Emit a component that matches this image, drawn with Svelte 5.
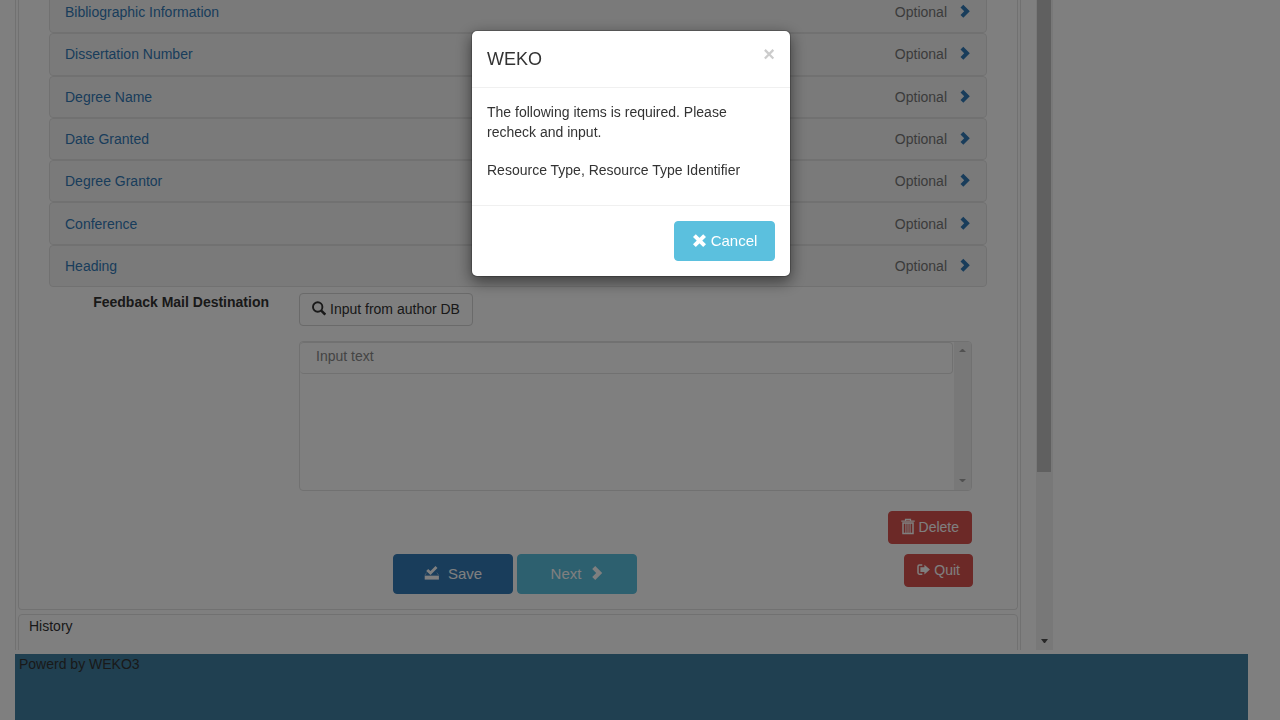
<script>
  const sections = [
    'Bibliographic Information',
    'Dissertation Number',
    'Degree Name',
    'Date Granted',
    'Degree Grantor',
    'Conference',
    'Heading'
  ];
  let open = $state(true);
  const close = () => (open = false);
</script>

<div class="page">
  <main>
    <div class="scroller">
      <div class="content">
        <section class="panel form">
          <div class="sections">
            {#each sections as name}
              <div class="section">
                <a href="#section">{name}</a>
                <span class="optional">Optional</span>
                <a href="#section" aria-label={`Expand ${name}`}>
                  <svg width="10" height="16" viewBox="0 0 10 16"><path fill="currentColor" d="M3.3 .8 9.8 7.3 3.3 13.8 .5 11 4.2 7.3 .5 3.6z" /></svg>
                </a>
              </div>
            {/each}
          </div>

          <div class="feedback">
            <label for="mail">Feedback Mail Destination</label>
            <div class="fields">
              <button class="btn plain">
                <svg width="14" height="16" viewBox="0 0 14 16"><circle cx="5.7" cy="6" r="4.7" fill="none" stroke="currentColor" stroke-width="1.9" /><path d="m9 9.3 4.3 4.3" stroke="currentColor" stroke-width="2.5" /></svg>
                Input from author DB
              </button>
              <div class="mailbox">
                <div class="mails"><input id="mail" type="text" placeholder="Input text" /></div>
                <div class="bar">
                  <svg width="7" height="4" viewBox="0 0 7 4"><path d="M0 4h7L4 1H3z" fill="#a3a3a3" /></svg>
                  <svg width="7" height="4" viewBox="0 0 7 4"><path d="M0 0h7L4 3H3z" fill="#a3a3a3" /></svg>
                </div>
              </div>
              <button class="btn danger delete">
                <svg width="14" height="18" viewBox="0 0 14 18"><path d="M4.5 3V1.3h5V3M.3 3.2h13.4" fill="none" stroke="currentColor" stroke-width="1.2" /><path d="M2 5h10v10.5H2z" fill="none" stroke="currentColor" stroke-width="1.5" /><path d="M4.9 5v10M7 5v10M9.1 5v10" stroke="currentColor" stroke-width="1" /></svg>
                Delete
              </button>
            </div>
          </div>

          <div class="actions">
            <span></span>
            <div class="pair">
              <button class="btn large primary">
                <svg width="16" height="18" viewBox="0 0 16 18"><path d="m3.2 4.9 3.3 3.2 6-6" fill="none" stroke="currentColor" stroke-width="2.8" /><path d="M2.6 7.6.8 10.4h14l-2-2.8" fill="none" stroke="currentColor" stroke-width=".8" opacity=".5" /><path d="M.7 11h14.2v3.6H.7z" fill="currentColor" /></svg>
                Save
              </button>
              <button class="btn large info next">
                Next
                <svg width="12" height="18" viewBox="0 0 12 18"><path fill="currentColor" d="M4.2 .9 11.2 7.9 4.2 14.9 1.2 11.9 5.2 7.9 1.2 3.9z" /></svg>
              </button>
            </div>
            <button class="btn danger quit">
              <svg width="13" height="14" viewBox="0 0 13 14"><path d="M5.3 2H2.4Q1 2 1 3.4v6.4q0 1.4 1.4 1.4h2.9" fill="none" stroke="currentColor" stroke-width="1.5" /><path d="M3.4 4.3h4V1.7L12.9 6.6 7.4 11.5V8.9h-4z" fill="currentColor" /></svg>
              Quit
            </button>
          </div>
        </section>
        <section class="panel history">History</section>
      </div>
      <div class="track">
        <div class="thumb"></div>
        <svg width="7" height="4" viewBox="0 0 7 4"><path d="M0 0h7L4 4H3z" fill="#505050" /></svg>
      </div>
    </div>
  </main>
  <footer>Powerd by WEKO3</footer>
</div>

{#if open}
  <div class="backdrop">
    <div class="dialog" role="dialog" aria-modal="true" aria-labelledby="dialog-title">
      <header>
        <h4 id="dialog-title">WEKO</h4>
        <button class="close" aria-label="Close" onclick={close}>×</button>
      </header>
      <div class="message">
        <p>The following items is required. Please recheck and input.</p>
        <p>Resource Type, Resource Type Identifier</p>
      </div>
      <div class="dialog-actions">
        <button class="btn large info cancel" onclick={close}>
          <svg width="15" height="16" viewBox="0 0 15 16"><path d="m2.4 2.6 10.2 10M12.6 2.6l-10.2 10" stroke="currentColor" stroke-width="4" /></svg>
          Cancel
        </button>
      </div>
    </div>
  </div>
{/if}

<style>
  :global(body) {
    margin: 0;
    background: #fff;
  }
  * {
    box-sizing: border-box;
  }
  .page {
    display: flex;
    flex-direction: column;
    height: 100vh;
    padding: 0 32px 0 15px;
    overflow: hidden;
    font: 14px/20px "Liberation Sans", Arial, sans-serif;
    color: #333;
  }
  main {
    display: grid;
    grid-template-columns: 1038fr 195fr;
    flex: 1;
    min-height: 0;
    margin-bottom: 4px;
  }
  .scroller {
    display: flex;
    justify-content: space-between;
    min-height: 0;
    overflow: hidden;
  }
  .content {
    flex: 1;
    margin-right: 15px;
    padding: 0 2px;
    border: solid #e3e3e3;
    border-width: 0 1px;
  }
  .panel {
    border: 1px solid #e3e3e3;
    border-radius: 4px;
  }
  .form {
    padding: 0 30px 15px;
    border-top: 0;
  }
  .sections {
    display: grid;
    grid-auto-rows: 1fr;
    height: 296px;
    margin-top: -9px;
  }
  .section {
    display: flex;
    align-items: center;
    padding: 0 16px 0 15px;
    background: #f5f5f5;
    border: 1px solid #e3e3e3;
    border-radius: 4px;
  }
  a {
    color: #337ab7;
    text-decoration: none;
  }
  .section svg {
    display: block;
  }
  .optional {
    margin: 0 13px 0 auto;
    color: #777;
  }
  .feedback {
    display: grid;
    grid-template-columns: 220px 1fr;
    column-gap: 30px;
    padding: 5px 15px 0 0;
  }
  label {
    font-weight: bold;
    text-align: right;
  }
  .fields {
    display: flex;
    flex-direction: column;
    align-items: flex-start;
    padding-top: 1px;
  }
  .btn {
    display: inline-flex;
    align-items: center;
    justify-content: center;
    gap: 4px;
    height: 33px;
    padding: 0 12px 1px;
    border: 1px solid;
    border-radius: 4px;
    font: inherit;
    color: #fff;
    white-space: nowrap;
  }
  .plain {
    background: #fff;
    border-color: #d4d4d4;
    color: #333;
  }
  .danger {
    background: #d9534f;
    border-color: #d9534f;
  }
  .primary {
    background: #337ab7;
    border-color: #337ab7;
  }
  .info {
    background: #5bc0de;
    border-color: #5bc0de;
  }
  .large {
    gap: 8px;
    width: 120px;
    height: 40px;
    font-size: 15px;
  }
  .next {
    gap: 10px;
  }
  .mailbox {
    display: flex;
    width: 100%;
    height: 150px;
    margin: 15px 0 20px;
    border: 1px solid #e3e3e3;
    border-radius: 4px;
    overflow: hidden;
  }
  .mails {
    flex: 1;
    margin: 0 1px 0 0;
  }
  input {
    display: block;
    width: 100%;
    height: 32px;
    padding: 0 16px 5px;
    border: 1px solid #e3e3e3;
    border-left: 0;
    border-radius: 4px;
    font: inherit;
  }
  input::placeholder {
    color: #888;
    opacity: 1;
  }
  .bar {
    display: flex;
    flex-direction: column;
    align-items: center;
    justify-content: space-between;
    width: 17px;
    padding: 6px 0 7px;
    background: #f1f1f1;
  }
  .delete {
    align-self: flex-end;
  }
  .actions {
    display: grid;
    grid-template-columns: 1fr auto 1fr;
    margin: 10px 14px 0 0;
    padding-left: 8px;
  }
  .pair {
    display: flex;
    gap: 4px;
  }
  .quit {
    justify-self: end;
  }
  .history {
    margin-top: 4px;
    padding: 1px 10px 30px;
  }
  .track {
    display: flex;
    flex-direction: column;
    align-items: center;
    width: 17px;
    padding: 0 2px 7px 1px;
    background: #f1f1f1;
  }
  .thumb {
    flex: 1;
    width: 100%;
    margin-bottom: 167px;
    background: #c1c1c1;
  }
  footer {
    min-height: 66px;
    padding: 0 4px;
    background: #4080a2;
  }
  .backdrop {
    position: fixed;
    inset: 0;
    padding: 30px 18px 0 0;
    background: rgba(0, 0, 0, 0.5);
    font: 14px/20px "Liberation Sans", Arial, sans-serif;
    color: #333;
  }
  .dialog {
    width: 320px;
    margin: 0 auto;
    background: #fff;
    border: 1px solid rgba(0, 0, 0, 0.2);
    border-radius: 6px;
    background-clip: padding-box;
    box-shadow: 0 5px 15px rgba(0, 0, 0, 0.5);
  }
  header {
    display: flex;
    align-items: flex-start;
    justify-content: space-between;
    padding: 15px;
    border-bottom: 1px solid #f0f0f0;
  }
  h4 {
    margin: 0;
    font-size: 18px;
    font-weight: normal;
    line-height: 26px;
  }
  .close {
    padding: 0;
    background: none;
    border: 0;
    font: bold 20px/16px "Liberation Sans", Arial, sans-serif;
    color: #ccc;
  }
  .message {
    padding: 14px 15px 25px;
  }
  p {
    margin: 0;
  }
  p + p {
    margin-top: 18px;
  }
  .dialog-actions {
    display: flex;
    justify-content: flex-end;
    padding: 15px;
    border-top: 1px solid #f0f0f0;
  }
  .cancel {
    gap: 4px;
    width: 101px;
  }
</style>
